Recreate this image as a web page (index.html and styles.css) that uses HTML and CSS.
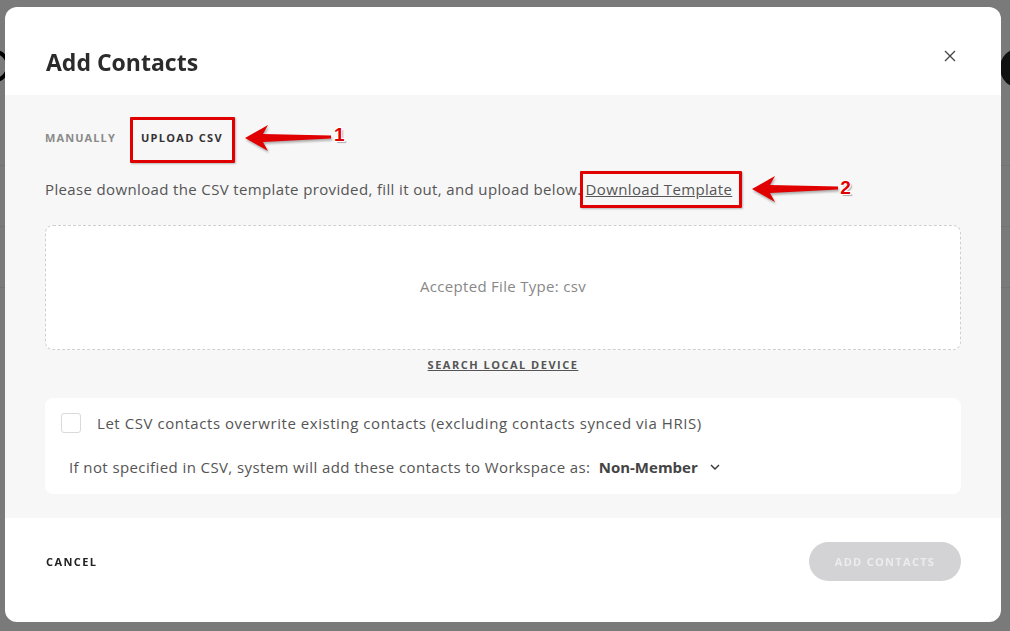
FILE: index.html
```html
<!DOCTYPE html>
<html lang="en">
<head>
<meta charset="utf-8">
<title>Add Contacts</title>
<link rel="stylesheet" href="styles.css">
</head>
<body>
<div class="page">
  <div class="page-head">
    <span class="page-logo"></span>
    <span class="page-btn"></span>
  </div>
  <div class="page-rows">
    <div class="page-row"></div>
    <div class="page-row"></div>
    <div class="page-row"></div>
  </div>
</div>
<div class="overlay"></div>
<div class="modal">
  <header class="modal-head">
    <h2 class="modal-title">Add Contacts</h2>
    <button class="close" aria-label="Close">
      <svg width="12" height="12" viewBox="0 0 12 12"><path d="M1 1L11 11M11 1L1 11" stroke="#444" stroke-width="1.3" fill="none"/></svg>
    </button>
  </header>
  <main class="modal-body">
    <nav class="tabs">
      <span class="tab">MANUALLY</span>
      <span class="tab tab-active">UPLOAD CSV
        <span class="mark mark-1"></span>
        <svg class="arrow arrow-1" width="90" height="30" viewBox="0 0 90 30"><polygon points="2,15 25,2 20,11 88,12.5 88,15.5 20,19 25,28" fill="#e00000"/></svg>
        <span class="num num-1">1</span>
      </span>
    </nav>
    <p class="desc">Please download the CSV template provided, fill it out, and upload below.<a class="dl" href="#">Download Template</a><span class="dl-anno"><span class="mark mark-2"></span><svg class="arrow arrow-2" width="90" height="30" viewBox="0 0 90 30"><polygon points="2,15 25,2 20,11 88,12.5 88,15.5 20,19 25,28" fill="#e00000"/></svg><span class="num num-2">2</span></span></p>
    <div class="dropzone">Accepted File Type: csv</div>
    <div class="search"><a href="#" class="search-link">SEARCH LOCAL DEVICE</a></div>
    <section class="card">
      <label class="check-row"><span class="checkbox"></span><span>Let CSV contacts overwrite existing contacts (excluding contacts synced via HRIS)</span></label>
      <div class="role-row">If not specified in CSV, system will add these contacts to Workspace as: <strong class="role">Non-Member</strong>
        <svg class="chev" width="10" height="6" viewBox="0 0 10 6"><path d="M1 1L5 5L9 1" stroke="#333" stroke-width="1.4" fill="none"/></svg>
      </div>
    </section>
  </main>
  <footer class="modal-foot">
    <a href="#" class="cancel">CANCEL</a>
    <button class="add">ADD CONTACTS</button>
  </footer>
</div>
</body>
</html>
```
FILE: styles.css
```css
html, body {
  margin: 0;
  padding: 0;
  height: 100%;
  overflow: hidden;
}
body {
  background: #fff;
  font-family: "Open Sans", "Liberation Sans", sans-serif;
  color: #555;
}
.page {
  height: 100%;
}
.page-head {
  display: flex;
  justify-content: space-between;
  align-items: flex-start;
  height: 120px;
}
.page-logo {
  width: 22px;
  height: 24px;
  border: 4px solid #000;
  border-radius: 50%;
  margin: 50px 0 0 -20px;
}
.page-btn {
  width: 60px;
  height: 40px;
  border-radius: 20px;
  background: #222;
  margin: 48px -50px 0 0;
}
.page-rows {
  display: flex;
  flex-direction: column;
  gap: 60px;
  padding-top: 45px;
}
.page-row {
  height: 1px;
  background: #eee;
}
.overlay {
  position: fixed;
  inset: 0;
  background: rgba(0, 0, 0, 0.52);
}
.modal {
  position: fixed;
  top: 7px;
  left: 5px;
  width: 996px;
  height: 615px;
  background: #fff;
  border-radius: 12px;
  overflow: hidden;
  display: flex;
  flex-direction: column;
}
.modal-head {
  height: 88px;
  flex: none;
  display: flex;
  align-items: flex-start;
  justify-content: space-between;
  padding: 0 45px 0 41px;
  box-sizing: border-box;
}
.modal-title {
  margin: 40px 0 0;
  font-size: 23px;
  line-height: 30px;
  font-weight: 700;
  color: #2b2b2b;
}
.close {
  border: 0;
  background: none;
  padding: 0;
  width: 12px;
  height: 12px;
  margin-top: 43px;
  display: flex;
}
.modal-body {
  flex: 1;
  background: #f7f7f7;
  padding: 0 40px;
  display: flex;
  flex-direction: column;
}
.tabs {
  display: flex;
  gap: 25px;
  margin-top: 34px;
  height: 18px;
  align-items: center;
}
.tab {
  font-size: 11px;
  font-weight: 700;
  letter-spacing: 1.1px;
  color: #8a8a8a;
  line-height: 18px;
}
.tab-active {
  color: #333;
  position: relative;
  letter-spacing: 1.3px;
}
.mark {
  position: absolute;
  border: 3px solid #e00000;
  box-sizing: border-box;
  border-radius: 1px;
  box-shadow: 1px 1px 2px rgba(0,0,0,0.25);
}
.mark-1 {
  left: -11px;
  top: -12px;
  width: 105px;
  height: 46px;
}
.arrow {
  position: absolute;
  filter: drop-shadow(1px 2px 1px rgba(0,0,0,0.3));
}
.arrow-1 {
  left: 102px;
  top: -6px;
}
.num {
  position: absolute;
  font-family: "Liberation Sans", sans-serif;
  font-weight: 700;
  font-size: 19px;
  color: #e00000;
  line-height: 20px;
  text-shadow: 1px 1px 0 #fff, -1px -1px 0 #fff, 1px -1px 0 #fff, -1px 1px 0 #fff, 2px 2px 1px rgba(0,0,0,0.3);
  letter-spacing: 0;
}
.num-1 {
  left: 193px;
  top: -4px;
}
.desc {
  margin: 32px 0 0;
  font-size: 15px;
  line-height: 20px;
  letter-spacing: 0.36px;
  color: #555;
  position: relative;
  white-space: nowrap;
}
.dl {
  color: #555;
  text-decoration: underline;
  margin-left: 4px;
}
.dl-anno {
  position: relative;
  display: inline-block;
  width: 0;
  height: 20px;
  vertical-align: top;
}
.mark-2 {
  left: -152px;
  top: -8px;
  width: 162px;
  height: 37px;
}
.arrow-2 {
  left: 18px;
  top: -5px;
}
.num-2 {
  left: 108px;
  top: -1px;
}
.dropzone {
  margin-top: 26px;
  height: 125px;
  background: #fff;
  border: 1px dashed #cfcfcf;
  border-radius: 8px;
  box-sizing: border-box;
  display: flex;
  align-items: center;
  justify-content: center;
  font-size: 15px;
  letter-spacing: 0.3px;
  color: #888;
  padding-bottom: 4px;
}
.search {
  display: flex;
  justify-content: center;
  margin-top: 7px;
  line-height: 16px;
}
.search-link {
  font-size: 11px;
  font-weight: 700;
  letter-spacing: 1.5px;
  color: #555;
  text-decoration: underline;
}
.card {
  margin-top: 25px;
  background: #fff;
  border-radius: 8px;
  padding: 15px 16px 0;
  height: 96px;
  box-sizing: border-box;
  font-size: 15px;
  letter-spacing: 0.55px;
  color: #555;
}
.check-row {
  display: flex;
  align-items: center;
  gap: 16px;
  line-height: 20px;
}
.checkbox {
  width: 20px;
  height: 20px;
  border: 1px solid #dadada;
  border-radius: 3px;
  box-sizing: border-box;
  flex: none;
}
.role-row {
  margin-top: 23px;
  padding-left: 8px;
  line-height: 22px;
  display: flex;
  align-items: center;
  white-space: pre;
  letter-spacing: 0.4px;
}
.role {
  color: #444;
  font-weight: 700;
  margin-left: 4px;
  letter-spacing: 0;
}
.chev {
  margin-left: 12px;
}
.modal-foot {
  height: 104px;
  flex: none;
  display: flex;
  align-items: center;
  justify-content: space-between;
  padding: 0 40px 17px 41px;
  box-sizing: border-box;
}
.cancel {
  font-size: 11px;
  font-weight: 700;
  letter-spacing: 1.4px;
  color: #222;
  text-decoration: none;
}
.add {
  width: 152px;
  height: 39px;
  border: 0;
  border-radius: 20px;
  background: #d3d3d5;
  color: #ececec;
  font-family: "Open Sans", "Liberation Sans", sans-serif;
  font-size: 11px;
  font-weight: 700;
  letter-spacing: 1.3px;
  padding: 0;
}
```
